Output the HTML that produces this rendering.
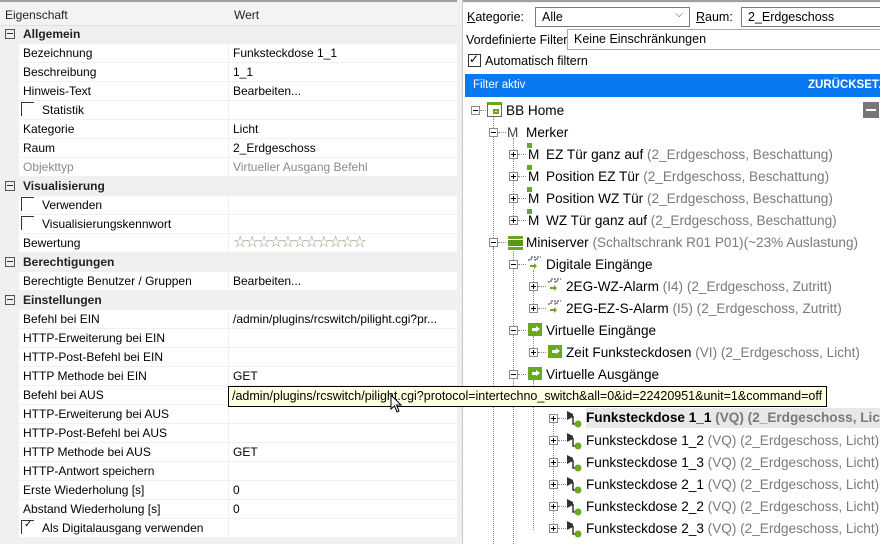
<!DOCTYPE html>
<html><head><meta charset="utf-8"><style>
*{box-sizing:border-box;margin:0;padding:0}
body{width:880px;height:544px;overflow:hidden;background:#f0f0f0;font-family:"Liberation Sans","DejaVu Sans",sans-serif;font-size:12px;color:#000;position:relative}
.lp{position:absolute;left:0;top:0;width:457px;height:544px;background:#f0f0f0}
.hdr{position:absolute;left:0;top:0;width:457px;height:26px;border-top:2px solid #a0a0a0;background:#f3f3f3;border-bottom:1px solid #e0e0e0}
.hdr span{position:absolute;top:6px;color:#222}
.rows{position:absolute;left:0;top:25px;width:457px}
.r{height:19px;position:relative;border-bottom:1px solid #f0f0f0}
.r .n{position:absolute;left:19px;top:0;width:209px;height:18px;background:#fff;padding:2px 0 0 4px;white-space:nowrap}
.r .n.k{padding-left:23px}
.r .v{position:absolute;left:229px;top:0;width:228px;height:18px;background:#fff;padding:2px 0 0 4px;white-space:nowrap;overflow:hidden}
.c{height:19px;position:relative;font-weight:bold;color:#222}
.c .t{position:absolute;left:23px;top:2px}
.c .b{position:absolute;left:5px;top:4px;width:10px;height:10px;border:1px solid #555}
.c .b:after{content:"";position:absolute;left:1px;top:3px;width:6px;height:1px;background:#333}
.gr{color:#8a8a8a}
.cb{position:absolute;left:2px;top:1px;width:13px;height:14px;border-left:1px solid #333;border-top:1px solid #333}
.rp{position:absolute;left:462px;top:0;width:418px;height:544px;background:#fff;border-left:1px solid #c8c8c8}
.rp .top{position:absolute;left:0;top:0;width:418px;height:3px;border-top:2px solid #a0a0a0;background:#f0f0f0}
.ab{position:absolute;white-space:nowrap;font-size:12.5px}
.inp{position:absolute;border:1px solid #7a7a7a;background:#fff;padding:2px 0 0 6px;font-size:12.5px;white-space:nowrap}
.blue{position:absolute;left:2px;top:74px;width:416px;height:23px;background:#0a78f0;color:#fff}
.tr{position:absolute;font-size:13.6px;white-space:nowrap;height:20px;line-height:20px;margin-top:1px}
.g{color:#7a7a7a}
.ex{position:absolute;width:9px;height:9px;border:1px solid #8a8a8a;background:#fff}
.ex:before{content:"";position:absolute;left:1px;top:3px;width:5px;height:1px;background:#000}
.ex.p:after{content:"";position:absolute;left:3px;top:1px;width:1px;height:5px;background:#000}
.vl{position:absolute;width:0;border-left:1px dotted #888}
.hl{position:absolute;height:0;border-top:1px dotted #888;width:8px}
.tip{position:absolute;left:228px;top:386px;width:599px;height:21px;background:#ffffe1;border:1px solid #000;font-size:12.5px;padding:2px 0 0 3px;white-space:nowrap;z-index:5}
.st{color:#9a917c;font-size:16px;letter-spacing:-2.4px;padding-top:0!important;line-height:18px}
.va{position:absolute;width:14px;height:13px;background:#6aa81e}
.va:after{content:"";position:absolute;left:4px;top:5px;width:4px;height:3px;background:#fff}
.va:before{content:"";position:absolute;left:8px;top:3px;border-left:4px solid #fff;border-top:3.5px solid transparent;border-bottom:3.5px solid transparent}
</style></head><body>
<div class="lp">
<div class="hdr"><span style="left:5px">Eigenschaft</span><span style="left:234px">Wert</span></div>
<div class="rows">
<div class="c"><div class="b"></div><span class="t">Allgemein</span></div>
<div class="r"><div class="n">Bezeichnung</div><div class="v">Funksteckdose 1_1</div></div>
<div class="r"><div class="n">Beschreibung</div><div class="v">1_1</div></div>
<div class="r"><div class="n">Hinweis-Text</div><div class="v">Bearbeiten...</div></div>
<div class="r"><div class="n k"><div class="cb"></div>Statistik</div><div class="v"></div></div>
<div class="r"><div class="n">Kategorie</div><div class="v">Licht</div></div>
<div class="r"><div class="n">Raum</div><div class="v">2_Erdgeschoss</div></div>
<div class="r"><div class="n gr">Objekttyp</div><div class="v gr">Virtueller Ausgang Befehl</div></div>
<div class="c"><div class="b"></div><span class="t">Visualisierung</span></div>
<div class="r"><div class="n k"><div class="cb"></div>Verwenden</div><div class="v"></div></div>
<div class="r"><div class="n k"><div class="cb"></div>Visualisierungskennwort</div><div class="v"></div></div>
<div class="r"><div class="n">Bewertung</div><div class="v st">☆☆☆☆☆☆☆☆☆☆☆</div></div>
<div class="c"><div class="b"></div><span class="t">Berechtigungen</span></div>
<div class="r"><div class="n">Berechtigte Benutzer / Gruppen</div><div class="v">Bearbeiten...</div></div>
<div class="c"><div class="b"></div><span class="t">Einstellungen</span></div>
<div class="r"><div class="n">Befehl bei EIN</div><div class="v">/admin/plugins/rcswitch/pilight.cgi?pr...</div></div>
<div class="r"><div class="n">HTTP-Erweiterung bei EIN</div><div class="v"></div></div>
<div class="r"><div class="n">HTTP-Post-Befehl bei EIN</div><div class="v"></div></div>
<div class="r"><div class="n">HTTP Methode bei EIN</div><div class="v">GET</div></div>
<div class="r"><div class="n">Befehl bei AUS</div><div class="v"></div></div>
<div class="r"><div class="n">HTTP-Erweiterung bei AUS</div><div class="v"></div></div>
<div class="r"><div class="n">HTTP-Post-Befehl bei AUS</div><div class="v"></div></div>
<div class="r"><div class="n">HTTP Methode bei AUS</div><div class="v">GET</div></div>
<div class="r"><div class="n">HTTP-Antwort speichern</div><div class="v"></div></div>
<div class="r"><div class="n">Erste Wiederholung [s]</div><div class="v">0</div></div>
<div class="r"><div class="n">Abstand Wiederholung [s]</div><div class="v">0</div></div>
<div class="r"><div class="n k"><div class="cb"><span style="position:absolute;left:2px;top:-2px;font-size:10px">✓</span></div>Als Digitalausgang verwenden</div><div class="v"></div></div>
</div>
</div>
<div class="tip">/admin/plugins/rcswitch/pilight.cgi?protocol=intertechno_switch&amp;all=0&amp;id=22420951&amp;unit=1&amp;command=off</div>
<svg style="position:absolute;left:390px;top:394px;z-index:6" width="14" height="20"><path d="M1 1 L1 15 L4.5 12 L7 18 L9 17 L6.5 11 L11 11 Z" fill="#fff" stroke="#000" stroke-width="1"/></svg>

<div class="rp">
<div class="top"></div>
<div class="ab" style="left:4px;top:10px"><u>K</u>ategorie:</div>
<div class="inp" style="left:72px;top:7px;width:155px;height:20px">Alle<span style="position:absolute;right:6px;top:1px;color:#444;font-size:10px">⌵</span></div>
<div class="ab" style="left:233px;top:10px"><u>R</u>aum:</div>
<div class="inp" style="left:278px;top:7px;width:145px;height:20px">2_Erdgeschoss</div>
<div class="ab" style="left:3px;top:33px">Vordefinierte Filter</div>
<div class="inp" style="left:104px;top:29px;width:320px;height:21px;border-color:#aaa">Keine Einschränkungen</div>
<div style="position:absolute;left:5px;top:54px;width:13px;height:13px;border:1px solid #333"><span style="position:absolute;left:0px;top:-3px;font-size:12px">✓</span></div>
<div class="ab" style="left:22px;top:54px">Automatisch filtern</div>
<div class="blue"><span style="position:absolute;left:8px;top:5px;font-size:11.5px">Filter aktiv</span><span style="position:absolute;left:343px;top:5px;font-size:11.5px;font-weight:bold">ZURÜCKSETZEN</span></div>
<div style="position:absolute;left:400px;top:102px;width:16px;height:16px;background:#777"><div style="position:absolute;left:3px;top:7px;width:10px;height:2px;background:#fff"></div></div>

<div class="vl" style="left:30px;top:116px;height:136px"></div>
<div class="vl" style="left:50px;top:138px;height:82px"></div>
<div class="vl" style="left:30px;top:248px;height:296px"></div>
<div class="vl" style="left:50px;top:248px;height:296px"></div>
<div class="vl" style="left:70px;top:270px;height:40px"></div>
<div class="vl" style="left:70px;top:336px;height:18px"></div>
<div class="vl" style="left:70px;top:380px;height:150px"></div>
<div class="vl" style="left:90px;top:420px;height:110px"></div>

<div class="ex" style="left:8px;top:106px"></div><div class="hl" style="left:17px;top:110px"></div>
<div style="position:absolute;left:24px;top:102px;width:15px;height:15px;border:1px solid #666;border-top:3px solid #6aa81e"><div style="position:absolute;left:5px;top:4px;width:6px;height:5px;border:2px solid #6aa81e"></div></div>
<div class="tr" style="left:43px;top:100px">BB Home</div>

<div class="ex" style="left:26px;top:128px"></div><div class="hl" style="left:35px;top:132px"></div>
<div class="tr" style="left:44px;top:122px;color:#444">M</div><div class="tr" style="left:63px;top:122px">Merker</div>

<div class="ex p" style="left:46px;top:150px"></div><div class="hl" style="left:55px;top:154px"></div>
<div class="tr" style="left:65px;top:144px">M</div><div style="position:absolute;left:64px;top:143px;width:5px;height:5px;background:#6aa81e"></div><div class="tr" style="left:83px;top:144px">EZ Tür ganz auf <span class="g">(2_Erdgeschoss, Beschattung)</span></div>
<div class="ex p" style="left:46px;top:172px"></div><div class="hl" style="left:55px;top:176px"></div>
<div class="tr" style="left:65px;top:166px">M</div><div style="position:absolute;left:64px;top:165px;width:5px;height:5px;background:#6aa81e"></div><div class="tr" style="left:83px;top:166px">Position EZ Tür <span class="g">(2_Erdgeschoss, Beschattung)</span></div>
<div class="ex p" style="left:46px;top:194px"></div><div class="hl" style="left:55px;top:198px"></div>
<div class="tr" style="left:65px;top:188px">M</div><div style="position:absolute;left:64px;top:187px;width:5px;height:5px;background:#6aa81e"></div><div class="tr" style="left:83px;top:188px">Position WZ Tür <span class="g">(2_Erdgeschoss, Beschattung)</span></div>
<div class="ex p" style="left:46px;top:216px"></div><div class="hl" style="left:55px;top:220px"></div>
<div class="tr" style="left:65px;top:210px">M</div><div style="position:absolute;left:64px;top:209px;width:5px;height:5px;background:#6aa81e"></div><div class="tr" style="left:83px;top:210px">WZ Tür ganz auf <span class="g">(2_Erdgeschoss, Beschattung)</span></div>

<div class="ex" style="left:26px;top:238px"></div><div class="hl" style="left:35px;top:242px"></div>
<div style="position:absolute;left:45px;top:236px;width:15px;height:3px;background:#6aa81e"></div><div style="position:absolute;left:45px;top:240px;width:15px;height:6px;background:#5a9418"></div><div style="position:absolute;left:45px;top:247px;width:15px;height:3px;background:#6aa81e"></div>
<div class="tr" style="left:63px;top:232px">Miniserver <span class="g">(Schaltschrank R01 P01)(~23% Auslastung)</span></div>

<svg style="position:absolute;left:64px;top:256px" width="16" height="60">
<g id="di"><path d="M1 4 L4 4 L4 1 L8 1 L8 4 L10 4 L10 1 L14 1" fill="none" stroke="#333" stroke-width="1" stroke-dasharray="2 1"/><path d="M3 9 L7 9 L7 7 L10 10 L7 13 L7 11 L3 11 Z" fill="#6aa81e"/></g>
</svg>
<svg style="position:absolute;left:84px;top:278px" width="16" height="40">
<use href="#di"/><use href="#di" y="22"/>
</svg>

<div class="ex" style="left:46px;top:260px"></div><div class="hl" style="left:55px;top:264px"></div>
<div class="tr" style="left:83px;top:254px">Digitale Eingänge</div>

<div class="ex p" style="left:66px;top:282px"></div><div class="hl" style="left:75px;top:286px"></div>
<div class="tr" style="left:103px;top:276px">2EG-WZ-Alarm <span class="g">(I4) (2_Erdgeschoss, Zutritt)</span></div>
<div class="ex p" style="left:66px;top:304px"></div><div class="hl" style="left:75px;top:308px"></div>
<div class="tr" style="left:103px;top:298px">2EG-EZ-S-Alarm <span class="g">(I5) (2_Erdgeschoss, Zutritt)</span></div>

<div class="ex" style="left:46px;top:326px"></div><div class="hl" style="left:55px;top:330px"></div>
<div class="va" style="left:65px;top:323px"></div>
<div class="tr" style="left:83px;top:320px">Virtuelle Eingänge</div>
<div class="ex p" style="left:66px;top:348px"></div><div class="hl" style="left:75px;top:352px"></div>
<div class="va" style="left:85px;top:345px"></div>
<div class="tr" style="left:103px;top:342px">Zeit Funksteckdosen <span class="g">(VI) (2_Erdgeschoss, Licht)</span></div>
<div class="ex" style="left:46px;top:370px"></div><div class="hl" style="left:55px;top:374px"></div>
<div class="va" style="left:65px;top:367px"></div>
<div class="tr" style="left:83px;top:364px">Virtuelle Ausgänge</div>

<div style="position:absolute;left:123px;top:408px;width:295px;height:20px;background:#e8e8e8"></div>
<div class="ex p" style="left:86px;top:414px"></div><div class="hl" style="left:95px;top:418px"></div>
<div class="tr" style="left:123px;top:407px;font-weight:bold">Funksteckdose 1_1 <span class="g">(VQ) (2_Erdgeschoss, Licht)</span></div>
<div class="ex p" style="left:86px;top:436px"></div><div class="hl" style="left:95px;top:440px"></div>
<div class="tr" style="left:123px;top:430px">Funksteckdose 1_2 <span class="g">(VQ) (2_Erdgeschoss, Licht)</span></div>
<div class="ex p" style="left:86px;top:458px"></div><div class="hl" style="left:95px;top:462px"></div>
<div class="tr" style="left:123px;top:452px">Funksteckdose 1_3 <span class="g">(VQ) (2_Erdgeschoss, Licht)</span></div>
<div class="ex p" style="left:86px;top:480px"></div><div class="hl" style="left:95px;top:484px"></div>
<div class="tr" style="left:123px;top:474px">Funksteckdose 2_1 <span class="g">(VQ) (2_Erdgeschoss, Licht)</span></div>
<div class="ex p" style="left:86px;top:502px"></div><div class="hl" style="left:95px;top:506px"></div>
<div class="tr" style="left:123px;top:496px">Funksteckdose 2_2 <span class="g">(VQ) (2_Erdgeschoss, Licht)</span></div>
<div class="ex p" style="left:86px;top:524px"></div><div class="hl" style="left:95px;top:528px"></div>
<div class="tr" style="left:123px;top:518px">Funksteckdose 2_3 <span class="g">(VQ) (2_Erdgeschoss, Licht)</span></div>

<svg style="position:absolute;left:103px;top:410px" width="18" height="134">
<g id="ic"><path d="M1 1 L7 4 L7 7 L1 10 Z" fill="#333"/><path d="M7 6 L7 14 L10 14" fill="none" stroke="#333" stroke-width="1.5"/><circle cx="12" cy="14" r="3.5" fill="#6aa81e"/></g>
<use href="#ic" y="22"/><use href="#ic" y="44"/><use href="#ic" y="66"/><use href="#ic" y="88"/><use href="#ic" y="110"/>
</svg>
</div>
</body></html>
